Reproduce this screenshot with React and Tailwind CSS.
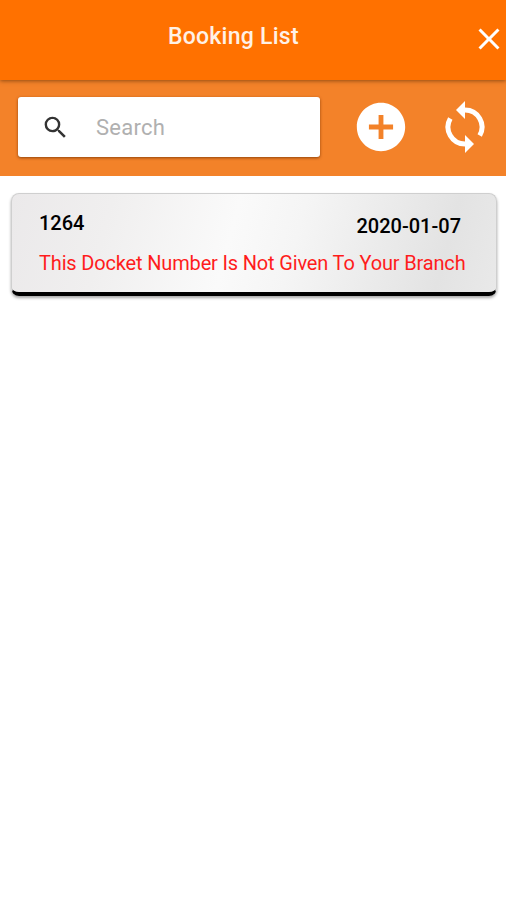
import { useState } from "react";
import { MdAddCircle, MdClose, MdSearch } from "react-icons/md";

const bookings = [
  {
    docket: "1264",
    date: "2020-01-07",
    message: "This Docket Number Is Not Given To Your Branch",
  },
];

function SyncIcon() {
  return (
    <svg width="56" height="56" viewBox="0 0 56 56" fill="none" stroke="currentColor" strokeWidth="5">
      <path d="M27 11h1a17 17 0 0 1 14.7 25.5" />
      <path d="M28 2v18l-9-9z" fill="currentColor" stroke="none" />
      <path d="M29 45h-1a17 17 0 0 1-14.7-25.5" />
      <path d="M28 54V36l9 9z" fill="currentColor" stroke="none" />
    </svg>
  );
}

function Header() {
  return (
    <header className="relative z-10 flex h-20 items-center justify-end bg-[#ff7100] shadow-[0_1px_4px_rgba(80,40,0,0.6)]">
      <h1 className="flex-1 pb-[7px] pl-[168px] text-[23px] leading-7 font-medium tracking-[0.25px] whitespace-nowrap text-[#fff1e6]">
        Booking List
      </h1>
      <button aria-label="Close" className="-mr-px pb-0.5 text-white">
        <MdClose size={36} />
      </button>
    </header>
  );
}

function Toolbar({ query, onSearch }) {
  return (
    <div className="flex h-24 items-center bg-[#f38229] pb-0.5 pl-[18px]">
      <label className="flex h-[60px] w-[302px] items-center rounded-[3px] bg-white pl-[23px] shadow-[0_1px_3px_rgba(110,45,0,0.75)]">
        <MdSearch size={29} className="shrink-0 text-[#333]" />
        <input
          value={query}
          onChange={(e) => onSearch(e.target.value)}
          placeholder="Search"
          className="ml-[26px] w-[190px] text-[22px] tracking-[0.25px] outline-none placeholder:text-[#b0b0b0]"
        />
      </label>
      <button aria-label="Add booking" className="ml-8 text-white">
        <MdAddCircle size={58} />
      </button>
      <button aria-label="Refresh" className="ml-[27px] text-white">
        <SyncIcon />
      </button>
    </div>
  );
}

function BookingCard({ booking }) {
  return (
    <article className="h-[103px] rounded-[8px] border border-b-4 border-[#cfcfcf] border-b-black bg-[linear-gradient(105deg,#ebe9ea_0%,#f0efef_20%,#fafafa_45%,#f5f5f5_58%,#e3e3e3_88%,#e9e9e9_100%)] pr-[35px] pl-[27px] shadow-[0_2px_3px_rgba(0,0,0,0.35)]">
      <div className="flex h-[55px] justify-between text-[20px] leading-6 font-medium text-black">
        <span className="pt-[17px]">{booking.docket}</span>
        <span className="pt-5">{booking.date}</span>
      </div>
      <p className="text-[20px] leading-7 tracking-[-0.16px] whitespace-nowrap text-[#ff1c1c]">
        {booking.message}
      </p>
    </article>
  );
}

function App() {
  const [query, setQuery] = useState("");

  const visible = bookings.filter((b) => b.docket.includes(query));

  return (
    <div className="min-h-screen w-full overflow-hidden bg-white font-['Roboto',sans-serif]">
      <Header />
      <Toolbar query={query} onSearch={setQuery} />
      <main className="flex flex-col gap-4 pt-[17px] pr-[9px] pl-[11px]">
        {visible.map((b) => (
          <BookingCard key={b.docket} booking={b} />
        ))}
      </main>
    </div>
  );
}

export default App;
